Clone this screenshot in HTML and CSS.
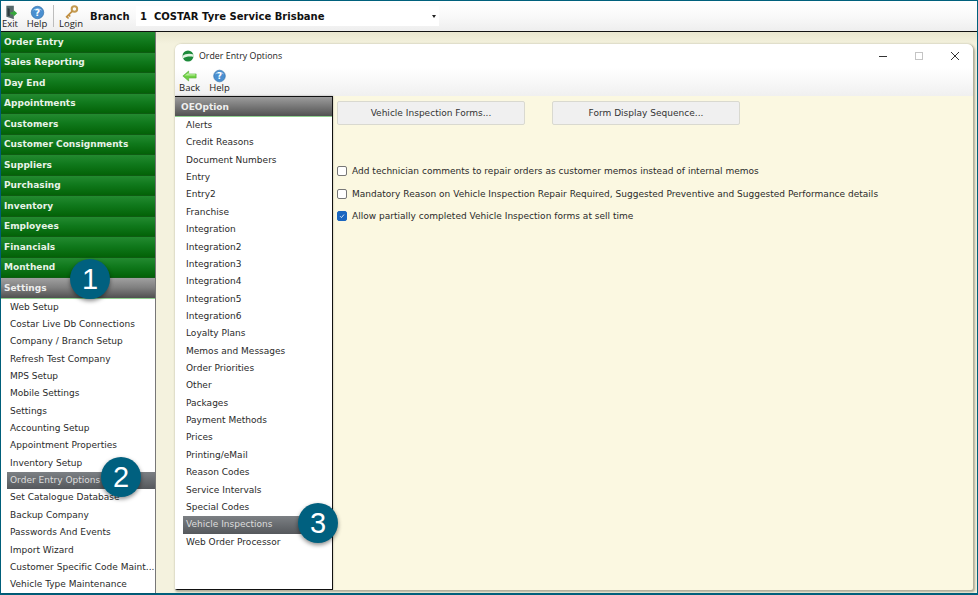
FILE: index.html
```html
<!DOCTYPE html>
<html lang="en">
<head>
<meta charset="utf-8">
<title>Order Entry Options</title>
<link rel="stylesheet" href="styles.css">
</head>
<body>
<div class="app">
  <header class="topbar">
    <button class="tool tool-exit"><svg class="tool-icon" viewBox="0 0 18 18"><path d="M4 1h9v16l-4-1.500V3.500L4 2zM4 2l5 1.500v12L4 14z" fill="#56686a"/><path d="M5.500 3.500 8 4.500v9l-2.500-1z" fill="#2c3a3c"/><path d="M9 8.500h3.500V6l4.500 4-4.500 4v-2.500H9z" fill="#36a83c"/></svg><span>Exit</span></button>
    <button class="tool tool-help"><svg class="tool-icon" viewBox="0 0 18 18"><use href="#help"/></svg><span>Help</span></button>
    <i class="tool-sep"></i>
    <button class="tool tool-login"><svg class="tool-icon" viewBox="0 0 18 18"><circle cx="12.500" cy="4.800" r="3.300" fill="none" stroke="#c49a50" stroke-width="2.400"/><path d="M10 7.300 2.500 14.800M3.300 14l2.200 2.200M5.500 11.800l2 2" stroke="#c08f42" stroke-width="2" fill="none"/></svg><span>Login</span></button>
    <div class="branch">
      <span class="branch-label">Branch</span>
      <div class="branch-select"><span>1&nbsp;&nbsp;COSTAR Tyre Service Brisbane</span><i class="caret"></i></div>
    </div>
  </header>
  <div class="body">
    <nav class="sidebar">
      <a class="group">Order Entry</a>
      <a class="group">Sales Reporting</a>
      <a class="group">Day End</a>
      <a class="group">Appointments</a>
      <a class="group">Customers</a>
      <a class="group">Customer Consignments</a>
      <a class="group">Suppliers</a>
      <a class="group">Purchasing</a>
      <a class="group">Inventory</a>
      <a class="group">Employees</a>
      <a class="group">Financials</a>
      <a class="group">Monthend</a>
      <a class="group group-active">Settings<b class="badge badge-1">1</b></a>
      <div class="side-items">
        <a class="item">Web Setup</a>
        <a class="item">Costar Live Db Connections</a>
        <a class="item">Company / Branch Setup</a>
        <a class="item">Refresh Test Company</a>
        <a class="item">MPS Setup</a>
        <a class="item">Mobile Settings</a>
        <a class="item">Settings</a>
        <a class="item">Accounting Setup</a>
        <a class="item">Appointment Properties</a>
        <a class="item">Inventory Setup</a>
        <a class="item item-active">Order Entry Options<b class="badge badge-2">2</b></a>
        <a class="item">Set Catalogue Database</a>
        <a class="item">Backup Company</a>
        <a class="item">Passwords And Events</a>
        <a class="item">Import Wizard</a>
        <a class="item">Customer Specific Code Maint...</a>
        <a class="item">Vehicle Type Maintenance</a>
      </div>
    </nav>
    <main class="desk">
      <section class="window">
        <div class="titlebar">
          <svg class="logo" viewBox="0 0 12 12"><circle cx="6" cy="6" r="5.500" fill="#1c8a3a"/><path d="M.5 6C3 3.500 8 3 11.500 4.500 11.800 5.500 11.800 6 11.500 7 8 6 4 6.500 1 8.500.7 7.800.5 7 .5 6z" fill="#dff3e0"/></svg>
          <span class="title">Order Entry Options</span>
          <div class="controls">
            <svg viewBox="0 0 10 10"><path d="M1 5.500h8" stroke="#333" stroke-width="1"/></svg>
            <svg viewBox="0 0 10 10"><rect x="1.500" y="1.500" width="7" height="7" fill="none" stroke="#c4c4c4"/></svg>
            <svg viewBox="0 0 10 10"><path d="M1 1l8 8M9 1l-8 8" stroke="#333" stroke-width="1"/></svg>
          </div>
        </div>
        <div class="win-tools">
          <button class="tool tool-back"><svg class="tool-icon" viewBox="0 0 18 14"><path d="M1 7l7-6v3.500h9v5H8V13z" fill="#6fd045" stroke="#4aa52e" stroke-width=".6"/><path d="M3 6.500 8 3v2h8v1.500z" fill="#b8f09a"/></svg><span>Back</span></button>
          <button class="tool tool-help2"><svg class="tool-icon" viewBox="0 0 18 18"><use href="#help"/></svg><span>Help</span></button>
        </div>
        <div class="win-body">
          <aside class="options">
            <div class="options-head">OEOption</div>
            <div class="options-list">
              <a class="opt">Alerts</a>
              <a class="opt">Credit Reasons</a>
              <a class="opt">Document Numbers</a>
              <a class="opt">Entry</a>
              <a class="opt">Entry2</a>
              <a class="opt">Franchise</a>
              <a class="opt">Integration</a>
              <a class="opt">Integration2</a>
              <a class="opt">Integration3</a>
              <a class="opt">Integration4</a>
              <a class="opt">Integration5</a>
              <a class="opt">Integration6</a>
              <a class="opt">Loyalty Plans</a>
              <a class="opt">Memos and Messages</a>
              <a class="opt">Order Priorities</a>
              <a class="opt">Other</a>
              <a class="opt">Packages</a>
              <a class="opt">Payment Methods</a>
              <a class="opt">Prices</a>
              <a class="opt">Printing/eMail</a>
              <a class="opt">Reason Codes</a>
              <a class="opt">Service Intervals</a>
              <a class="opt">Special Codes</a>
              <a class="opt opt-active">Vehicle Inspections<b class="badge badge-3">3</b></a>
              <a class="opt">Web Order Processor</a>
            </div>
          </aside>
          <div class="pane">
            <div class="buttons">
              <button class="btn">Vehicle Inspection Forms...</button>
              <button class="btn">Form Display Sequence...</button>
            </div>
            <div class="checks">
              <label class="check"><i class="box"></i>Add technician comments to repair orders as customer memos instead of internal memos</label>
              <label class="check"><i class="box"></i>Mandatory Reason on Vehicle Inspection Repair Required, Suggested Preventive and Suggested Performance details</label>
              <label class="check"><i class="box box-on"><svg viewBox="0 0 10 10"><path d="M2.500 5.200 4.300 7l3.200-3.800" fill="none" stroke="#fff" stroke-width="1"/></svg></i>Allow partially completed Vehicle Inspection forms at sell time</label>
            </div>
          </div>
        </div>
      </section>
    </main>
  </div>
</div>
<svg class="defs" width="0" height="0"><defs><g id="help"><circle cx="9" cy="9" r="7.500" fill="#4a8fd0" stroke="#2f6ea8" stroke-width=".8"/><path d="M3 7a6.500 5 0 0 1 12 0c-4-2-8-2-12 0z" fill="#a9d0ef"/><text x="9" y="13" text-anchor="middle" class="help-q">?</text></g></defs></svg>
</body>
</html>
```
FILE: styles.css
```css
* { box-sizing: border-box; }
html, body { margin: 0; padding: 0; }
body { width: 978px; height: 595px; overflow: hidden; background: #00607c; font-family: "DejaVu Sans", Verdana, sans-serif; font-size: 9px; letter-spacing: .015px; color: #222; }
a { display: block; }
.defs { position: absolute; }
.help-q { font: bold 11px "DejaVu Sans", sans-serif; fill: #fff; }
.app { display: flex; flex-direction: column; height: 592px; margin: 1px 1px 0 1px; background: #f4f2de; }
.topbar { display: flex; align-items: center; height: 31px; flex: none; background: linear-gradient(#fff, #f9f9f9 50%, #eeeeee); border-bottom: 1px solid #111; }
.tool { display: flex; flex-direction: column; align-items: center; flex: none; border: 0; padding: 0; background: none; font: 9.500px "Open Sans", sans-serif; color: #222; line-height: 10px; }
.tool-icon { width: 15px; height: 15px; display: block; }
.topbar .tool { align-self: flex-start; padding-top: 4px; }
.topbar .tool-icon { margin-bottom: -1px; }
.tool-exit { width: 18px; }
.tool-help { width: 18px; margin-left: 9px; }
.tool-sep { width: 1px; height: 22px; background: #bdbdbd; margin: 0 4px 0 7px; flex: none; }
.tool-login { width: 26px; }
.branch { display: flex; align-items: center; margin-left: 6px; font-weight: bold; font-size: 10px; color: #111; }
.branch-label { width: 46px; }
.branch-select { display: flex; align-items: center; justify-content: space-between; width: 303px; height: 20px; padding: 0 0 0 4px; background: #fff; }
.caret { width: 0; height: 0; margin-right: 3px; border: 2.500px solid transparent; border-top: 3px solid #222; border-bottom: 0; }
.body { flex: 1; display: flex; min-height: 0; }
.sidebar { width: 155px; flex: none; display: flex; flex-direction: column; background: #fff; border-right: 1px solid #777; box-shadow: 1px 0 2px rgba(0,0,0,.25); }
.group { position: relative; height: 20.500px; flex: none; display: flex; align-items: center; padding-left: 3px; font-weight: bold; font-size: 9px; color: #e8f3e8; background: linear-gradient(#238a30, #10791c 45%, #036207); border-bottom: 1px solid #0e5c12; }
.group-active { color: #eee; background: linear-gradient(#a0a0a0, #7e7e7e 50%, #505050); border-bottom: 1px solid #8fd08f; }
.side-items { flex: 1; }
.item { position: relative; height: 17.370px; line-height: 17px; padding-left: 9px; color: #2a2a2a; white-space: nowrap; }
.item-active { margin-left: 6px; padding-left: 3px; color: #ddd; background: linear-gradient(#7c8084, #55585c); }
.badge { position: absolute; z-index: 5; width: 40px; height: 40px; border-radius: 50%; background: #00607f; color: #fff; font: 400 29px/40px "Liberation Sans", sans-serif; text-align: center; box-shadow: 0 2px 4px rgba(0,0,0,.45); }
.badge-1 { left: 69px; top: -19px; }
.badge-2 { left: 94px; top: -15px; }
.badge-3 { left: 115px; top: -13px; }
.desk { flex: 1; min-width: 0; padding: 12px 4px 2px 19px; background: linear-gradient(#e9e6cf, #f4f2de 12px); }
.window { display: flex; flex-direction: column; height: 546px; background: #fbf8e1; border-radius: 6px 6px 2px 2px; box-shadow: 1px 1px 2px 1px rgba(90,90,70,.45); overflow: hidden; }
.titlebar { display: flex; align-items: center; height: 24px; flex: none; padding-left: 7px; background: #fff; }
.logo { width: 12px; height: 12px; margin-right: 5px; }
.title { font: 8.800px "Open Sans", sans-serif; color: #222; flex: 1; }
.controls { display: flex; gap: 26px; padding-right: 13px; }
.controls svg { width: 10px; height: 10px; }
.win-tools { display: flex; height: 28px; flex: none; padding: 1px 0 0 3px; background: linear-gradient(#fff, #f0f0f0); }
.win-tools .tool-icon { width: 15px; height: 14px; }
.tool-back { width: 23px; }
.tool-help2 { width: 23px; margin-left: 7px; }
.win-body { flex: 1; display: flex; min-height: 0; }
.options { width: 158px; flex: none; display: flex; flex-direction: column; background: #fff; border: 1px solid #111; border-left: 0; box-shadow: 0 0 2px rgba(0,0,0,.3); }
.options-head { height: 20px; flex: none; display: flex; align-items: center; padding-left: 6px; font-weight: bold; font-size: 9px; color: #eee; background: linear-gradient(#9c9c9c, #525252); border-bottom: 1px solid #8fd08f; }
.opt { position: relative; height: 17.370px; line-height: 17px; padding-left: 11px; color: #2a2a2a; white-space: nowrap; }
.opt-active { margin-left: 8px; padding-left: 3px; color: #ddd; background: linear-gradient(#7c8084, #55585c); }
.pane { flex: 1; padding: 5px 0 0 4px; }
.buttons { display: flex; gap: 27px; }
.btn { width: 188px; height: 24px; border: 1px solid #d9d9d0; border-radius: 2px; background: #f0f0f0; font: 9px "DejaVu Sans", sans-serif; letter-spacing: .015px; color: #333; padding: 0; }
.checks { display: flex; flex-direction: column; margin-top: 38px; gap: 6px; }
.check { display: flex; align-items: center; height: 16.500px; color: #2a2a2a; white-space: nowrap; }
.box { width: 10px; height: 10px; margin-right: 5px; border: 1px solid #777; border-radius: 2px; background: #fff; display: block; }
.box-on { background: #1a66c0; border-color: #1a66c0; }
.box-on svg { display: block; width: 8px; height: 8px; }
```
